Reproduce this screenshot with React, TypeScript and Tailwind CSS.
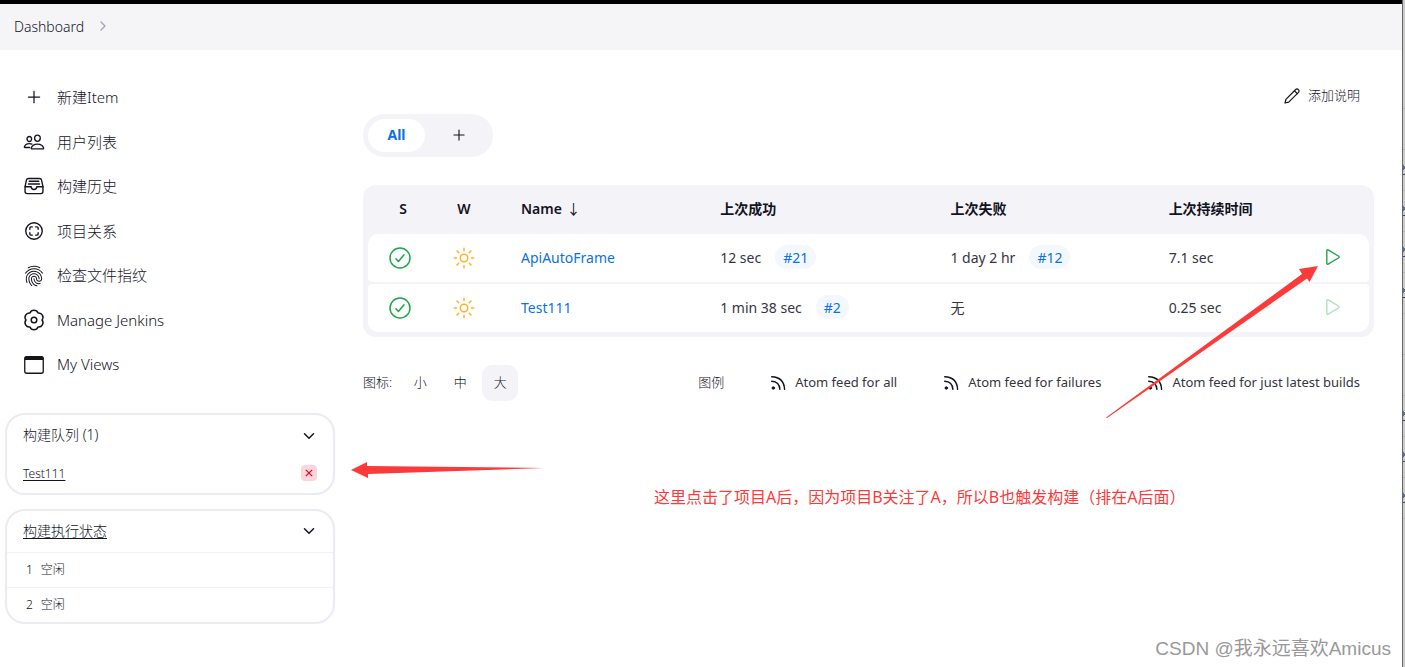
import type { ReactNode } from 'react';
import {
  IoAddOutline,
  IoPeopleOutline,
  IoFileTrayFullOutline,
  IoScanCircleOutline,
  IoFingerPrintOutline,
  IoSunnyOutline,
  IoPlayOutline,
  IoChevronDown,
  IoChevronForward,
} from 'react-icons/io5';

function GearIcon() {
  return (
    <svg viewBox="0 0 22 22" className="size-[22px]" fill="none" stroke="currentColor" strokeWidth="1.500" strokeLinejoin="round">
      <path d="M19 11A4.300 4.300 0 0 1 15 17.930A4.300 4.300 0 0 1 7 17.930A4.300 4.300 0 0 1 3 11A4.300 4.300 0 0 1 7 4.070A4.300 4.300 0 0 1 15 4.070A4.300 4.300 0 0 1 19 11z" />
      <circle cx="11" cy="11" r="2.800" />
    </svg>
  );
}

function WindowIcon() {
  return (
    <svg viewBox="0 0 22 22" className="size-[22px]" fill="none" stroke="currentColor">
      <rect x="1.750" y="2.750" width="18.500" height="16.500" rx="2" strokeWidth="1.300" />
      <path d="M2 5.500V4.500q0-2 2-2h14q2 0 2 2v1z" fill="currentColor" strokeWidth="1" />
    </svg>
  );
}

function PencilIcon() {
  return (
    <svg viewBox="0 0 16 16" className="size-4" fill="none" stroke="currentColor" strokeWidth="1.200" strokeLinecap="round" strokeLinejoin="round">
      <path d="M1 15l.9-3.700L11.700 1.500a1.700 1.700 0 0 1 2.500 0l.3.300a1.700 1.700 0 0 1 0 2.500L4.700 14.100z" />
      <path d="M10.500 2.800l2.700 2.700" />
    </svg>
  );
}

function FeedIcon() {
  return (
    <svg viewBox="0 0 16 16" className="size-4 shrink-0" fill="none" stroke="currentColor" strokeWidth="1.400" strokeLinecap="round">
      <circle cx="3.300" cy="13" r="1.300" fill="currentColor" strokeWidth="0.800" />
      <path d="M1.700 6.200Q9.500 6.600 9.900 14.400M1.700 1.700Q14 2.200 14.600 14.400" />
    </svg>
  );
}

function SuccessIcon() {
  return (
    <svg viewBox="0 0 24 24" className="size-6" fill="none" stroke="#1ea64b" strokeWidth="1.500" strokeLinecap="round" strokeLinejoin="round">
      <circle cx="12" cy="12" r="10" />
      <path d="M8 12.800l2.400 2.700L16 8.800" />
    </svg>
  );
}

const tasks: { label: string; icon: ReactNode }[] = [
  { label: '新建Item', icon: <IoAddOutline className="size-5" /> },
  { label: '用户列表', icon: <IoPeopleOutline className="size-[22px]" /> },
  { label: '构建历史', icon: <IoFileTrayFullOutline className="size-[22px]" /> },
  { label: '项目关系', icon: <IoScanCircleOutline className="size-[22px]" /> },
  { label: '检查文件指纹', icon: <IoFingerPrintOutline className="size-[22px]" /> },
  { label: 'Manage Jenkins', icon: <GearIcon /> },
  { label: 'My Views', icon: <WindowIcon /> },
];

const jobs = [
  { name: 'ApiAutoFrame', success: '12 sec', successRun: '#21', failure: '1 day 2 hr', failureRun: '#12', duration: '7.1 sec', queued: false },
  { name: 'Test111', success: '1 min 38 sec', successRun: '#2', failure: '无', failureRun: '', duration: '0.25 sec', queued: true },
];

const feeds = ['Atom feed for all', 'Atom feed for failures', 'Atom feed for just latest builds'];

function Run({ id }: { id: string }) {
  return (
    <a href="#run" className="ml-[14px] inline-flex h-6 items-center rounded-full bg-[#f2f8fe] px-2 text-[#0b72e0]">
      {id}
    </a>
  );
}

function Sidebar() {
  return (
    <aside className="w-[335px] shrink-0 pl-[5px] pt-[25px]">
      <nav className="grid h-[312px] auto-rows-fr">
        {tasks.map((t) => (
          <a key={t.label} href="#task" className="flex items-center gap-3 pl-[18px] text-[15px]">
            <span className="flex w-[22px] justify-center">{t.icon}</span>
            {t.label}
          </a>
        ))}
      </nav>

      <section className="mt-[26px] rounded-[20px] border-2 border-[#ebebf3] pb-1">
        <div className="flex h-[38px] items-center justify-between px-4 text-[14px]">
          <h2>构建队列 (1)</h2>
          <button type="button" aria-label="折叠构建队列" className="pt-1"><IoChevronDown className="size-4" /></button>
        </div>
        <div className="flex h-9 items-center justify-between px-4 pt-1 text-[12px]">
          <a href="#item" className="pt-[2px] underline underline-offset-2">Test111</a>
          <button type="button" aria-label="取消" className="flex size-4 items-center justify-center rounded bg-[#fbd5dc] text-[#e6001f]">
            <svg viewBox="0 0 8 8" className="size-2" stroke="currentColor" strokeWidth="1.200"><path d="M.800.800l6.400 6.400M7.200.800L.800 7.200" /></svg>
          </button>
        </div>
      </section>

      <section className="mt-[14px] rounded-[20px] border-2 border-[#ebebf3]">
        <div className="flex h-[41px] items-center justify-between px-4 pb-[2px] text-[14px]">
          <a href="#executors" className="underline underline-offset-2">构建执行状态</a>
          <button type="button" aria-label="折叠构建执行状态"><IoChevronDown className="size-4" /></button>
        </div>
        {[1, 2].map((n) => (
          <div key={n} className="flex h-[35px] items-center gap-2 border-t border-[#f1f1f6] pl-[19px] text-[12px]">
            <span>{n}</span>
            <span>空闲</span>
          </div>
        ))}
      </section>
    </aside>
  );
}

function JobTable() {
  return (
    <div className="mt-[28px] rounded-[13px] bg-[#f3f3f8] px-[5px] py-[3px]">
      <table className="w-full table-fixed border-separate border-spacing-x-0 border-spacing-y-[2px] text-left text-[14px] font-normal">
        <colgroup>
          <col className="w-16" />
          <col className="w-16" />
          <col className="w-[21.100%]" />
          <col className="w-[23%]" />
          <col className="w-[21.800%]" />
          <col />
          <col className="w-[72px]" />
        </colgroup>
        <thead>
          <tr className="h-[42px] *:pb-[6px] *:font-semibold">
            <th className="pl-[6px] text-center">S</th>
            <th className="text-center">W</th>
            <th className="pl-[25px]">Name <span className="ml-px font-normal">↓</span></th>
            <th className="pl-[13px]">上次成功</th>
            <th className="pl-[13px]">上次失败</th>
            <th className="pl-[13px]">上次持续时间</th>
            <th aria-label="构建" />
          </tr>
        </thead>
        <tbody className="text-[#35353f]">
          {jobs.map((j) => (
            <tr key={j.name} className="group h-12 *:bg-white">
              <td className="rounded-l-[4px] group-first:rounded-tl-[10px] group-last:rounded-bl-[10px]">
                <span className="flex justify-center"><SuccessIcon /></span>
              </td>
              <td><span className="flex justify-center"><IoSunnyOutline className="size-6 text-[#ffb224]" /></span></td>
              <td className="pb-[2px] pl-[25px]"><a href="#job" className="text-[#0b72e0]">{j.name}</a></td>
              <td className="pb-[2px] pl-[13px]">{j.success}<Run id={j.successRun} /></td>
              <td className="pb-[2px] pl-[13px]">{j.failure}{j.failureRun && <Run id={j.failureRun} />}</td>
              <td className="pb-[2px] pl-[13px]">{j.duration}</td>
              <td className="rounded-r-[4px] pb-[2px] group-first:rounded-tr-[10px] group-last:rounded-br-[10px]">
                <button type="button" aria-label="立即构建" disabled={j.queued} className="mx-auto flex text-[#1ea64b] disabled:opacity-35">
                  <IoPlayOutline className="size-[22px]" />
                </button>
              </td>
            </tr>
          ))}
        </tbody>
      </table>
    </div>
  );
}

function Arrows() {
  return (
    <svg className="pointer-events-none absolute left-0 top-0 h-[667px] w-[1405px]" fill="#fd3a3a" aria-hidden="true">
      <path d="M1106 417.500L1302 274L1299 269L1318 266L1309.500 282L1307 278.500L1107 418z" />
      <path d="M351 470L367 462V466L544 468L368 474V478z" />
    </svg>
  );
}

const edgeRows = [174, 215, 256, 297, 420, 461, 502];
const edgeRules = [108, 149, 190, 231, 272, 313, 354, 395, 436, 477, 518];

function WindowEdge() {
  return (
    <div className="w-[3px] shrink-0 border-l border-[#666] bg-[#cbcbcb]">
      <svg className="h-[520px] w-[2px]" shapeRendering="crispEdges" aria-hidden="true">
        {edgeRules.map((y) => <rect key={y} y={y} width="2" height="1" fill="#b9b9b9" />)}
        {edgeRows.map((y) => (
          <g key={y} fill="#3b4a70">
            <rect y={y} width="2" height="1" />
            <path d={`M0 ${y - 9}h1v1h1v3h-1v1h-1z`} opacity="0.7" />
          </g>
        ))}
      </svg>
    </div>
  );
}

export default function App() {
  return (
    <div className="relative flex min-h-screen bg-white font-['Noto_Sans','Noto_Sans_CJK_SC',sans-serif] font-light text-[#14141f]">
      <div className="min-w-0 flex-1">
        <header className="flex h-[50px] items-center gap-3 border-t-4 border-black bg-[#f5f5f8] pb-[2px] pl-[14px] text-[14px]">
          <a href="#dashboard">Dashboard</a>
          <IoChevronForward className="size-[14px] text-[#a3a3b5]" />
        </header>
        <div className="flex">
          <Sidebar />
          <main className="min-w-0 flex-1 px-7 pt-[30px]">
            <div className="mb-[2px] flex h-8 items-center justify-end pr-[14px] text-[13px]">
              <a href="#description" className="flex items-center gap-2"><PencilIcon />添加说明</a>
            </div>
            <div className="flex h-[43px] w-[130px] items-center rounded-full bg-[#f3f3f8] p-[5px]">
              <a href="#all" className="flex h-full w-[57px] items-center justify-center rounded-full bg-white pb-[2px] text-[14px] font-bold text-[#0b72e0]">All</a>
              <a href="#new-view" aria-label="新建视图" className="flex flex-1 justify-center pb-[2px] pl-1"><IoAddOutline className="size-[18px]" /></a>
            </div>
            <JobTable />
            <div className="mt-[28px] flex h-9 items-center justify-between pr-[14px] text-[13px]">
              <div className="flex items-center gap-1">
                <span className="mr-[6px]">图标:</span>
                <button type="button" className="size-9">小</button>
                <button type="button" className="size-9">中</button>
                <button type="button" className="size-9 rounded-[10px] bg-[#f3f3f8]">大</button>
              </div>
              <div className="flex items-center gap-[46px]">
                <a href="#legend">图例</a>
                {feeds.map((feed) => (
                  <a key={feed} href="#feed" className="flex items-center gap-[9px] font-normal">
                    <FeedIcon />
                    <span className="text-[#35353f]">{feed}</span>
                  </a>
                ))}
              </div>
            </div>
          </main>
        </div>
      </div>
      <WindowEdge />
      <Arrows />
      <p className="absolute left-[654px] top-[485px] text-[16px] font-normal leading-6 text-[#fd3a3a]">
        这里点击了项目A后，因为项目B关注了A，所以B也触发构建（排在A后面）
      </p>
      <p className="absolute bottom-[4px] right-[14px] font-['Liberation_Sans','Noto_Sans_CJK_SC',sans-serif] text-[19px] font-normal leading-7 text-[#999]">
        CSDN @我永远喜欢Amicus
      </p>
    </div>
  );
}
